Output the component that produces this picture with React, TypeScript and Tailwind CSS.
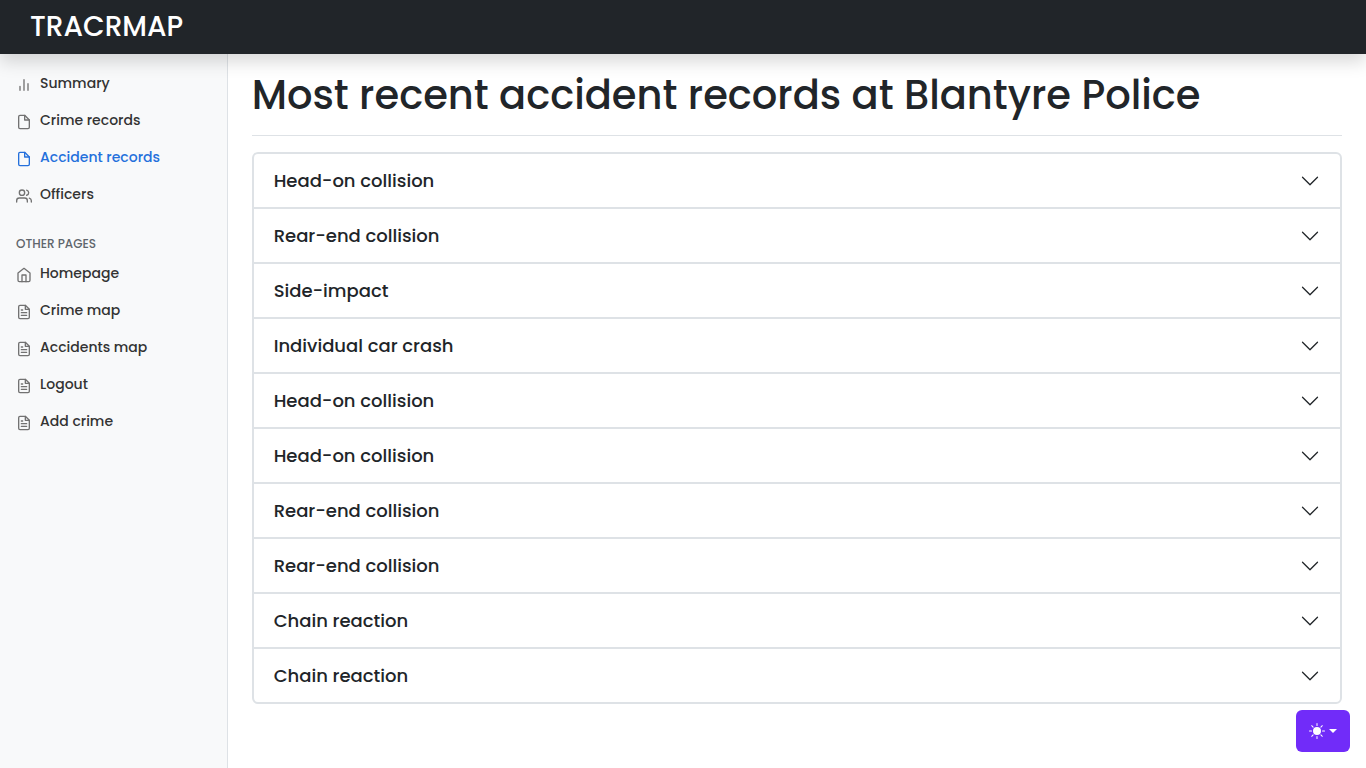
import { useState } from "react";
import type { ReactNode } from "react";

function FeatherIcon({ children }: { children: ReactNode }) {
  return (
    <svg
      className="mt-1 size-4 shrink-0"
      viewBox="0 0 24 24"
      fill="none"
      stroke="currentColor"
      strokeWidth="2"
      strokeLinecap="round"
      strokeLinejoin="round"
      aria-hidden="true"
    >
      {children}
    </svg>
  );
}

const barChart = (
  <FeatherIcon>
    <path d="M18 20V10M12 20V4M6 20v-6" />
  </FeatherIcon>
);

const file = (
  <FeatherIcon>
    <path d="M13 2H6a2 2 0 0 0-2 2v16a2 2 0 0 0 2 2h12a2 2 0 0 0 2-2V9z" />
    <path d="M13 2v7h7" />
  </FeatherIcon>
);

const fileText = (
  <FeatherIcon>
    <path d="M14 2H6a2 2 0 0 0-2 2v16a2 2 0 0 0 2 2h12a2 2 0 0 0 2-2V8z" />
    <path d="M14 2v6h6M16 13H8M16 17H8M10 9H8" />
  </FeatherIcon>
);

const users = (
  <FeatherIcon>
    <path d="M17 21v-2a4 4 0 0 0-4-4H5a4 4 0 0 0-4 4v2" />
    <circle cx="9" cy="7" r="4" />
    <path d="M23 21v-2a4 4 0 0 0-3-3.87M16 3.13a4 4 0 0 1 0 7.75" />
  </FeatherIcon>
);

const home = (
  <FeatherIcon>
    <path d="M3 9l9-7 9 7v11a2 2 0 0 1-2 2H5a2 2 0 0 1-2-2z" />
    <path d="M9 22V12h6v10" />
  </FeatherIcon>
);

type NavItem = { label: string; icon: ReactNode; active?: boolean };

const mainLinks: NavItem[] = [
  { label: "Summary", icon: barChart },
  { label: "Crime records", icon: file },
  { label: "Accident records", icon: file, active: true },
  { label: "Officers", icon: users },
];

const otherLinks: NavItem[] = [
  { label: "Homepage", icon: home },
  { label: "Crime map", icon: fileText },
  { label: "Accidents map", icon: fileText },
  { label: "Logout", icon: fileText },
  { label: "Add crime", icon: fileText },
];

const records = [
  "Head-on collision",
  "Rear-end collision",
  "Side-impact",
  "Individual car crash",
  "Head-on collision",
  "Head-on collision",
  "Rear-end collision",
  "Rear-end collision",
  "Chain reaction",
  "Chain reaction",
];

function NavList({ items }: { items: NavItem[] }) {
  return (
    <ul>
      {items.map((item) => (
        <li key={item.label}>
          <a
            href="#"
            aria-current={item.active ? "page" : undefined}
            className={
              item.active
                ? "flex gap-2 px-4 py-2 text-[#2470dc]"
                : "flex gap-2 px-4 py-2 text-[#727272]"
            }
          >
            {item.icon}
            <span
              className={
                item.active
                  ? "text-sm leading-[21px] font-medium"
                  : "text-sm leading-[21px] font-medium text-[#333333]"
              }
            >
              {item.label}
            </span>
          </a>
        </li>
      ))}
    </ul>
  );
}

function RecordRow({ title }: { title: string }) {
  const [open, setOpen] = useState(false);
  return (
    <li>
      <h2>
        <button
          type="button"
          aria-expanded={open}
          onClick={() => setOpen(!open)}
          className="flex w-full items-center justify-between px-5 py-4 text-left text-lg leading-[21px] font-medium"
        >
          {title}
          <svg
            className={open ? "size-5 rotate-180" : "size-5"}
            viewBox="0 0 16 16"
            fill="currentColor"
            aria-hidden="true"
          >
            <path
              fillRule="evenodd"
              d="M1.646 4.646a.5.5 0 0 1 .708 0L8 10.293l5.646-5.647a.5.5 0 0 1 .708.708l-6 6a.5.5 0 0 1-.708 0l-6-6a.5.5 0 0 1 0-.708z"
            />
          </svg>
        </button>
      </h2>
    </li>
  );
}

export default function App() {
  return (
    <div className="flex min-h-screen flex-col bg-white font-['Poppins','Inter',sans-serif] text-[#212529]">
      <header className="z-10 flex bg-[#212529] px-[30px] py-2 shadow-[0_8px_16px_rgba(0,0,0,0.15)]">
        <a href="#" className="text-[28px] leading-[38px] font-medium text-white">
          TRACRMAP
        </a>
      </header>

      <div className="flex grow">
        <nav aria-label="Sidebar" className="w-1/6 shrink-0 border-r border-[#dee2e6] bg-[#f8f9fa] pt-[11px]">
          <NavList items={mainLinks} />
          <h2 className="mt-6 mb-1 px-4 text-xs leading-[14px] font-medium text-[#5f666c] uppercase">
            Other pages
          </h2>
          <NavList items={otherLinks} />
        </nav>

        <main className="min-w-0 grow px-6 pt-[17px]">
          <h1 className="mb-4 border-b border-[#dee2e6] pb-4 text-[40px] leading-[48px] font-medium">
            Most recent accident records at Blantyre Police
          </h1>
          <ul className="divide-y-2 divide-[#dee2e6] rounded-md border-2 border-[#dee2e6]">
            {records.map((title, index) => (
              <RecordRow key={index} title={title} />
            ))}
          </ul>
        </main>
      </div>

      <button
        type="button"
        aria-label="Toggle theme"
        className="fixed right-4 bottom-4 flex h-[42px] items-center gap-1 rounded-md bg-[#712cf9] px-[13px] text-white"
      >
        <svg className="size-4" viewBox="0 0 16 16" fill="currentColor" aria-hidden="true">
          <path d="M8 12a4 4 0 1 0 0-8 4 4 0 0 0 0 8zM8 0a.5.5 0 0 1 .5.5v2a.5.5 0 0 1-1 0v-2A.5.5 0 0 1 8 0zm0 13a.5.5 0 0 1 .5.5v2a.5.5 0 0 1-1 0v-2A.5.5 0 0 1 8 13zm8-5a.5.5 0 0 1-.5.5h-2a.5.5 0 0 1 0-1h2a.5.5 0 0 1 .5.5zM3 8a.5.5 0 0 1-.5.5h-2a.5.5 0 0 1 0-1h2A.5.5 0 0 1 3 8zm10.657-5.657a.5.5 0 0 1 0 .707l-1.414 1.415a.5.5 0 1 1-.707-.708l1.414-1.414a.5.5 0 0 1 .707 0zm-9.193 9.193a.5.5 0 0 1 0 .707L3.05 13.657a.5.5 0 0 1-.707-.707l1.414-1.414a.5.5 0 0 1 .707 0zm9.193 2.121a.5.5 0 0 1-.707 0l-1.414-1.414a.5.5 0 0 1 .707-.707l1.414 1.414a.5.5 0 0 1 0 .707zM4.464 4.465a.5.5 0 0 1-.707 0L2.343 3.05a.5.5 0 1 1 .707-.707l1.414 1.414a.5.5 0 0 1 0 .708z" />
        </svg>
        <svg className="h-1 w-2" viewBox="0 0 8 4" fill="currentColor" aria-hidden="true">
          <path d="M0 0h8L4 4z" />
        </svg>
      </button>
    </div>
  );
}
